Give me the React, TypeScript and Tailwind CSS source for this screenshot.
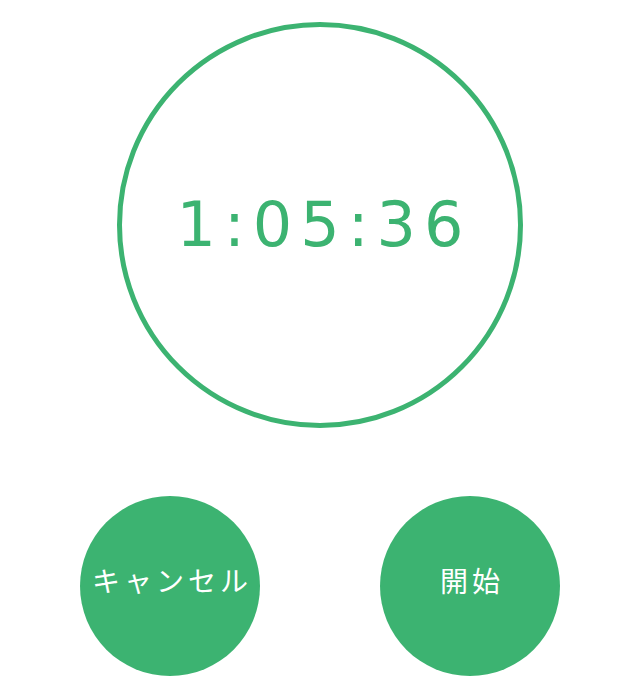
export default function App() {
  return (
    <div className="w-[640px] h-[692px] bg-white flex flex-col items-center" style={{ fontFamily: '"DejaVu Sans", "Noto Sans CJK JP", sans-serif' }}>
      <div className="mt-[22px] w-[406px] h-[406px] rounded-full border-[5px] border-[#3cb371] flex items-center justify-center">
        <span className="text-[62px] leading-none tracking-[8px] text-[#3cb371] pl-[8px]">1:05:36</span>
      </div>
      <div className="mt-[68px] w-full flex justify-between px-[80px]">
        <button className="w-[180px] h-[180px] rounded-full bg-[#3cb371] flex items-center justify-center pb-[12px] text-white text-[28px] tracking-[4px] pl-[4px]" style={{ fontFamily: '"Noto Sans CJK JP", sans-serif' }}>
          キャンセル
        </button>
        <button className="w-[180px] h-[180px] rounded-full bg-[#3cb371] flex items-center justify-center pb-[12px] text-white text-[28px] tracking-[4px] pl-[4px]" style={{ fontFamily: '"Noto Sans CJK JP", sans-serif' }}>
          開始
        </button>
      </div>
    </div>
  );
}
